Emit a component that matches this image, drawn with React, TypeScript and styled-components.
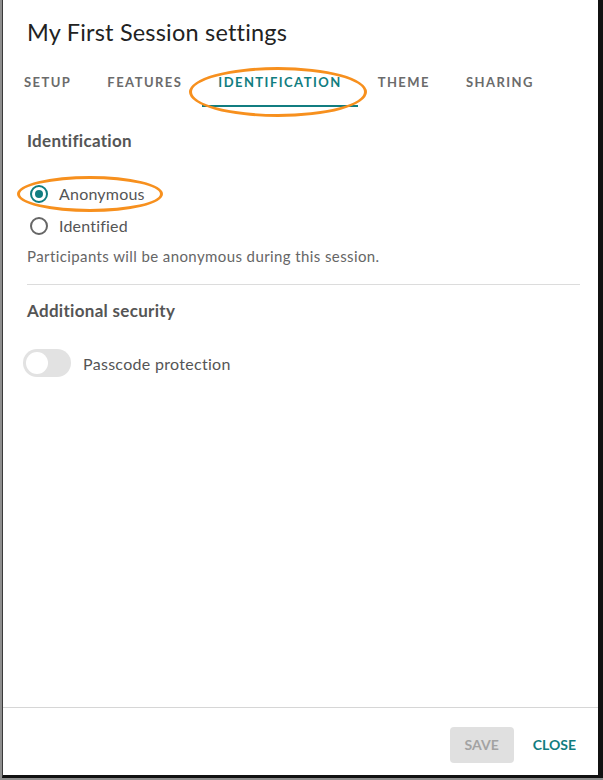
import React, { useState } from "react";
import styled, { createGlobalStyle } from "styled-components";

const teal = "#117d80";

const GlobalStyle = createGlobalStyle`
  html, body {
    margin: 0;
    padding: 0;
    background: #9a9a9a;
  }
  body {
    font-family: Lato, "Open Sans", Arial, sans-serif;
    -webkit-font-smoothing: antialiased;
  }
  * { box-sizing: border-box; }
`;

const Page = styled.div`
  width: 603px;
  height: 780px;
  padding-left: 2px;
  padding-bottom: 2px;
  background: #8e8e8e;
`;

const Dialog = styled.div`
  height: 100%;
  background: #fff;
  border-left: 1px solid #3a3a3a;
  border-right: 5px solid #111;
  border-bottom: 3px solid #111;
  display: flex;
  flex-direction: column;
`;

const Title = styled.h1`
  margin: 0;
  padding: 18px 24px 0 24px;
  font-size: 23.5px;
  font-weight: 400;
  letter-spacing: 0.2px;
  color: #222;
  line-height: 28px;
`;

const TabBar = styled.div`
  display: flex;
  gap: 4px;
  padding: 13px 0 0 5px;
`;

const Tab = styled.button<{ $active?: boolean }>`
  position: relative;
  border: none;
  background: none;
  height: 48px;
  padding: 0 16px;
  font-family: inherit;
  font-size: 13px;
  font-weight: 700;
  letter-spacing: 1.45px;
  text-transform: uppercase;
  color: ${({ $active }) => ($active ? teal : "#6b6b6b")};
  border-bottom: 2px solid ${({ $active }) => ($active ? teal : "transparent")};
  cursor: pointer;
`;

const Circled = styled.span<{ $w: number; $h: number; $dx: number; $dy: number }>`
  position: absolute;
  left: ${({ $dx }) => $dx}px;
  top: ${({ $dy }) => $dy}px;
  width: ${({ $w }) => $w}px;
  height: ${({ $h }) => $h}px;
  border: 3px solid #f7901e;
  border-radius: 50%;
  pointer-events: none;
`;

const Body = styled.div`
  flex: 1;
  padding: 0 18px 0 24px;
  display: flex;
  flex-direction: column;
`;

const SectionTitle = styled.h2`
  margin: 0;
  font-size: 17px;
  font-weight: 700;
  letter-spacing: 0.3px;
  color: #555;
  line-height: 20px;
`;

const RadioGroup = styled.div`
  display: flex;
  flex-direction: column;
  gap: 12px;
  margin-top: 33px;
  margin-left: 3px;
`;

const RadioRow = styled.label`
  position: relative;
  display: flex;
  align-items: center;
  gap: 11px;
  font-size: 16px;
  letter-spacing: 0.2px;
  color: #555;
  line-height: 20px;
  cursor: pointer;
`;

const RadioDot = styled.span<{ $on: boolean }>`
  width: 18px;
  height: 18px;
  border-radius: 50%;
  border: 2px solid ${({ $on }) => ($on ? teal : "#666")};
  display: flex;
  align-items: center;
  justify-content: center;
  &::after {
    content: "";
    width: 8px;
    height: 8px;
    border-radius: 50%;
    background: ${({ $on }) => ($on ? teal : "transparent")};
  }
`;

const Help = styled.p`
  margin: 10px 0 0;
  font-size: 15px;
  letter-spacing: 0.4px;
  color: #666;
  line-height: 20px;
`;

const Divider = styled.hr`
  border: none;
  border-top: 1px solid #dcdcdc;
  margin: 18px 0 16px;
`;

const ToggleRow = styled.label`
  display: flex;
  align-items: center;
  gap: 12px;
  margin-top: 28px;
  margin-left: -4px;
  font-size: 16px;
  letter-spacing: 0.3px;
  color: #555;
  cursor: pointer;
`;

const Track = styled.span<{ $on: boolean }>`
  width: 48px;
  height: 28px;
  border-radius: 14px;
  background: ${({ $on }) => ($on ? "#8cc6c7" : "#e2e2e2")};
  padding: 3px;
  display: flex;
  justify-content: ${({ $on }) => ($on ? "flex-end" : "flex-start")};
  &::after {
    content: "";
    width: 22px;
    height: 22px;
    border-radius: 50%;
    background: ${({ $on }) => ($on ? teal : "#fff")};
  }
`;

const Footer = styled.div`
  border-top: 1px solid #d6d6d6;
  display: flex;
  justify-content: flex-end;
  align-items: center;
  gap: 6px;
  height: 68px;
  padding: 6px 9px 0 0;
`;

const FooterButton = styled.button<{ $primary?: boolean }>`
  border: none;
  border-radius: 4px;
  height: 36px;
  padding: 0 ${({ $primary }) => ($primary ? 15 : 13)}px;
  font-family: inherit;
  font-size: 14px;
  font-weight: 700;
  background: ${({ $primary }) => ($primary ? "#e0e0e0" : "transparent")};
  color: ${({ $primary }) => ($primary ? "#a3a3a3" : teal)};
  cursor: pointer;
`;

const tabs = ["Setup", "Features", "Identification", "Theme", "Sharing"];

export default function App() {
  const [mode, setMode] = useState("anonymous");
  const [passcode, setPasscode] = useState(false);

  return (
    <>
      <GlobalStyle />
      <Page>
        <Dialog>
          <Title>My First Session settings</Title>
          <TabBar>
            {tabs.map((t) => (
              <Tab key={t} $active={t === "Identification"}>
                {t}
                {t === "Identification" && <Circled $w={178} $h={50} $dx={-13} $dy={8} />}
              </Tab>
            ))}
          </TabBar>
          <Body>
            <SectionTitle style={{ marginTop: 24 }}>Identification</SectionTitle>
            <RadioGroup>
              <RadioRow onClick={() => setMode("anonymous")}>
                <RadioDot $on={mode === "anonymous"} />
                Anonymous
                <Circled $w={146} $h={36} $dx={-13} $dy={-8} />
              </RadioRow>
              <RadioRow onClick={() => setMode("identified")}>
                <RadioDot $on={mode === "identified"} />
                Identified
              </RadioRow>
            </RadioGroup>
            <Help>Participants will be anonymous during this session.</Help>
            <Divider />
            <SectionTitle>Additional security</SectionTitle>
            <ToggleRow onClick={() => setPasscode(!passcode)}>
              <Track $on={passcode} />
              Passcode protection
            </ToggleRow>
          </Body>
          <Footer>
            <FooterButton $primary>SAVE</FooterButton>
            <FooterButton>CLOSE</FooterButton>
          </Footer>
        </Dialog>
      </Page>
    </>
  );
}
